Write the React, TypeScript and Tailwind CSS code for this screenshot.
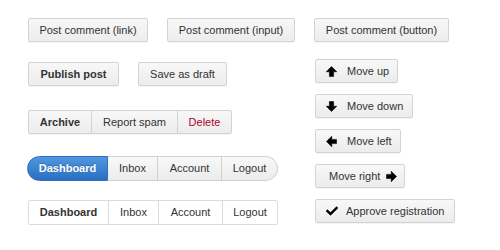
import React from "react";
import { FaCheck } from "react-icons/fa";

const btn =
  "h-6 flex items-center border border-[#d3d3d3] rounded-[2px] bg-gradient-to-b from-[#f8f8f8] to-[#ececec] text-[11px] text-[#333] shadow-[0_1px_0_rgba(0,0,0,0.04)]";

// bold arrow, pointing up by default
function Arrow({ rotate }: { rotate: string }) {
  return (
    <svg viewBox="0 0 12 12" className={`w-[11px] h-[11px] ${rotate}`}>
      <path d="M6 0.5 L11.8 6.3 L8.3 6.3 L8.3 11.5 L3.7 11.5 L3.7 6.3 L0.2 6.3 Z" fill="#000" strokeLinejoin="round" stroke="#000" strokeWidth="0.6" />
    </svg>
  );
}

export default function App() {
  return (
    <div className="w-[500px] h-[250px] bg-white font-['Liberation_Sans',Arial,sans-serif] overflow-hidden">
      {/* Top row */}
      <div className="flex pt-[18px] pl-[28px]">
        <button className={`${btn} w-[120px] justify-center`}>Post comment (link)</button>
        <button className={`${btn} w-[128px] justify-center ml-[19px]`}>Post comment (input)</button>
        <button className={`${btn} w-[135px] justify-center ml-[19px]`}>Post comment (button)</button>
      </div>

      <div className="flex">
        {/* Left column */}
        <div className="flex flex-col pl-[28px] w-[315px]">
          <div className="flex gap-[19px] mt-[20px]">
            <button className={`${btn} w-[91px] justify-center font-bold`}>Publish post</button>
            <button className={`${btn} w-[89px] justify-center`}>Save as draft</button>
          </div>

          {/* Segmented group */}
          <div className={`${btn} w-[204px] mt-[24px] p-0`}>
            <span className="w-[63px] h-full flex items-center justify-center font-bold border-r border-[#d3d3d3]">Archive</span>
            <span className="w-[86px] h-full flex items-center justify-center border-r border-[#d3d3d3]">Report spam</span>
            <span className="flex-1 h-full flex items-center justify-center text-[#b0002a]">Delete</span>
          </div>

          {/* Pill nav */}
          <div className="flex h-[25px] w-[251px] mt-[22px] -ml-px text-[11px] text-[#333]">
            <span className="w-[81px] flex items-center justify-center rounded-l-full bg-gradient-to-b from-[#4f98de] to-[#2b6ec1] border border-[#2d6dbd] text-white font-bold [text-shadow:0_-1px_0_rgba(0,0,0,0.25)]">
              Dashboard
            </span>
            <span className="w-[50px] flex items-center justify-center border-y border-r border-[#d0d0d0] bg-gradient-to-b from-[#f8f8f8] to-[#ececec]">Inbox</span>
            <span className="w-[64px] flex items-center justify-center border-y border-r border-[#d0d0d0] bg-gradient-to-b from-[#f8f8f8] to-[#ececec]">Account</span>
            <span className="flex-1 flex items-center justify-center border-y border-r border-[#d0d0d0] rounded-r-full bg-gradient-to-b from-[#f8f8f8] to-[#ececec]">Logout</span>
          </div>

          {/* Plain nav */}
          <div className="flex h-[25px] w-[250px] mt-[19px] border border-[#dcdcdc] rounded-[2px] bg-white text-[11px] text-[#333]">
            <span className="w-[80px] flex items-center justify-center font-bold border-r border-[#dcdcdc]">Dashboard</span>
            <span className="w-[50px] flex items-center justify-center border-r border-[#dcdcdc]">Inbox</span>
            <span className="w-[64px] flex items-center justify-center border-r border-[#dcdcdc]">Account</span>
            <span className="flex-1 flex items-center justify-center">Logout</span>
          </div>
        </div>

        {/* Right column */}
        <div className="flex flex-col items-start gap-[11px] mt-[17px]">
          <button className={`${btn} w-[83px] pl-[10px]`}>
            <Arrow rotate="" />
            <span className="ml-[10px]">Move up</span>
          </button>
          <button className={`${btn} w-[98px] pl-[10px]`}>
            <Arrow rotate="rotate-180" />
            <span className="ml-[10px]">Move down</span>
          </button>
          <button className={`${btn} w-[86px] pl-[10px]`}>
            <Arrow rotate="-rotate-90" />
            <span className="ml-[10px]">Move left</span>
          </button>
          <button className={`${btn} w-[90px] pl-[13px]`}>
            <span>Move right</span>
            <span className="ml-[6px] flex"><Arrow rotate="rotate-90" /></span>
          </button>
          <button className={`${btn} w-[140px] pl-[10px]`}>
            <FaCheck className="w-[12px] h-[12px] text-black" />
            <span className="ml-[8px]">Approve registration</span>
          </button>
        </div>
      </div>
    </div>
  );
}
